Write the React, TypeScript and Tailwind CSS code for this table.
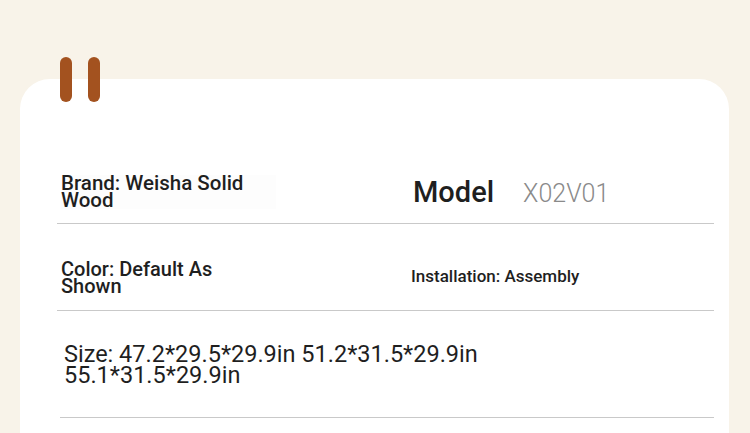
const specs = {
  brand: "Brand: Weisha Solid Wood",
  model: "X02V01",
  color: "Color: Default As Shown",
  install: "Installation: Assembly",
  size: "Size: 47.2*29.5*29.9in 51.2*31.5*29.9in 55.1*31.5*29.9in",
};

export default function App() {
  return (
    <div className="h-[433px] w-[750px] overflow-hidden bg-[#f8f3e9] pt-[79px] pl-[20px] font-['Roboto',sans-serif] text-[#1f1f1f]">
      <div className="relative h-[400px] w-[709px] rounded-[30px] bg-white pt-[96px] pl-[37px] pr-[15px]">
        {/* binder clips */}
        <div className="absolute left-[40px] top-[-22px] flex gap-[16px]">
          <div className="h-[45px] w-[12px] rounded-full bg-[#a3521f]" />
          <div className="h-[45px] w-[12px] rounded-full bg-[#a3521f]" />
        </div>

        <div className="flex items-center border-b border-[#c9c9c9] pb-[14px]">
          <div className="w-[356px] pl-[4px]">
            <div className="w-[215px] bg-[#fdfdfd] text-[20.5px] font-medium leading-[17px]">{specs.brand}</div>
          </div>
          <div className="flex items-baseline gap-[29px]">
            <span className="text-[29px] font-medium leading-none">Model</span>
            <span className="text-[25px] font-light leading-none text-[#8a8a8a]">{specs.model}</span>
          </div>
        </div>

        <div className="flex items-start border-b border-[#c9c9c9] pt-[37px] pb-[15px]">
          <div className="w-[354px] pl-[4px]">
            <div className="w-[190px] text-[20px] font-medium leading-[17px]">{specs.color}</div>
          </div>
          <div className="mt-[7px] text-[17px] font-medium leading-[16px]">{specs.install}</div>
        </div>

        <div className="ml-[3px] border-b border-[#c9c9c9] pt-[33px] pb-[31px]">
          <div className="w-[450px] pl-[4px] text-[23.5px] leading-[21px]">{specs.size}</div>
        </div>
      </div>
    </div>
  );
}
